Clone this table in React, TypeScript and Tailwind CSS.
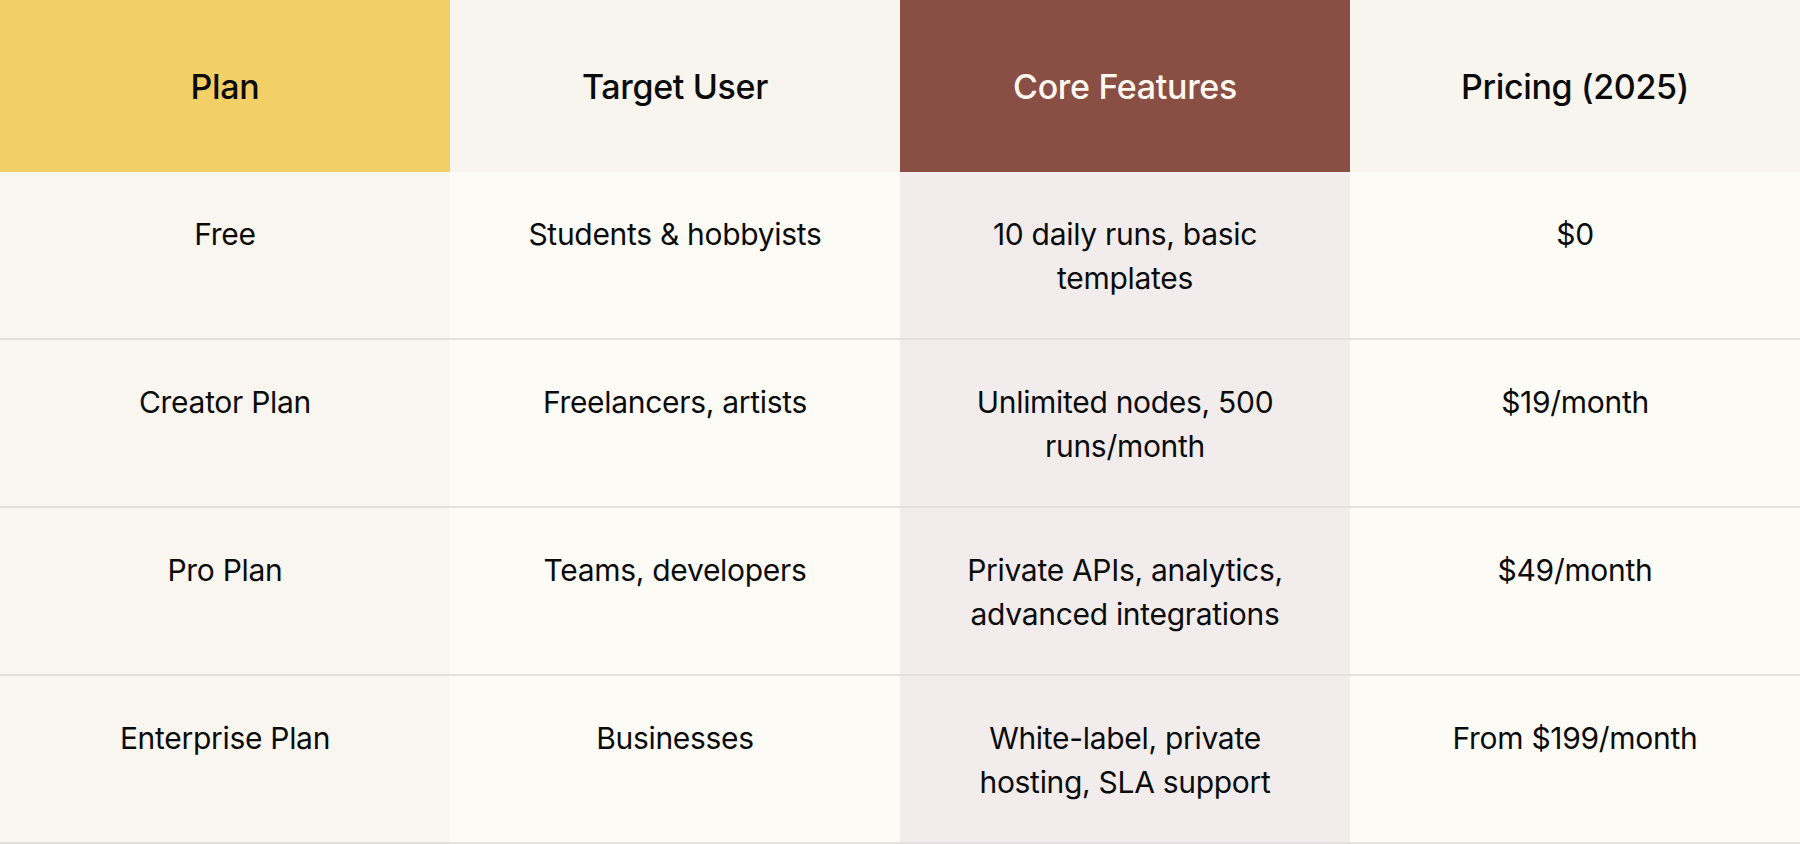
const headers = [
  { label: "Plan", className: "bg-[#F2D066] text-[#0B0B0B]" },
  { label: "Target User", className: "bg-[#F7F5EE] text-[#0B0B0B]" },
  { label: "Core Features", className: "bg-[#8A4F44] text-[#FFF8F0]" },
  { label: "Pricing (2025)", className: "bg-[#F7F5EE] text-[#0B0B0B]" },
];

const cellBg = ["bg-[#F8F6EF]", "bg-[#FDFBF6]", "bg-[#F2EDEC]", "bg-[#FDFBF6]"];

const rows = [
  ["Free", "Students & hobbyists", "10 daily runs, basic templates", "$0"],
  ["Creator Plan", "Freelancers, artists", "Unlimited nodes, 500 runs/month", "$19/month"],
  ["Pro Plan", "Teams, developers", "Private APIs, analytics, advanced integrations", "$49/month"],
  ["Enterprise Plan", "Businesses", "White-label, private hosting, SLA support", "From $199/month"],
];

export default function App() {
  return (
    <div
      className="w-[1800px] h-[844px] bg-[#FDFBF6] overflow-hidden"
      style={{ fontFamily: "Inter, 'Noto Sans', sans-serif" }}
    >
      <div className="grid grid-cols-4">
        {headers.map((h) => (
          <div
            key={h.label}
            className={`h-[172px] flex items-center justify-center text-[34px] font-medium tracking-[-0.01em] ${h.className}`}
          >
            {h.label}
          </div>
        ))}
      </div>

      {rows.map((row, i) => (
        <div key={i} className="grid grid-cols-4 border-b-2 border-[#E4E1DC]">
          {row.map((cell, j) => (
            <div
              key={j}
              className={`h-[166px] pt-[40px] px-[50px] text-center text-[30px] leading-[44px] tracking-[-0.01em] text-[#0B0B0B] ${cellBg[j]}`}
            >
              {cell}
            </div>
          ))}
        </div>
      ))}
    </div>
  );
}
